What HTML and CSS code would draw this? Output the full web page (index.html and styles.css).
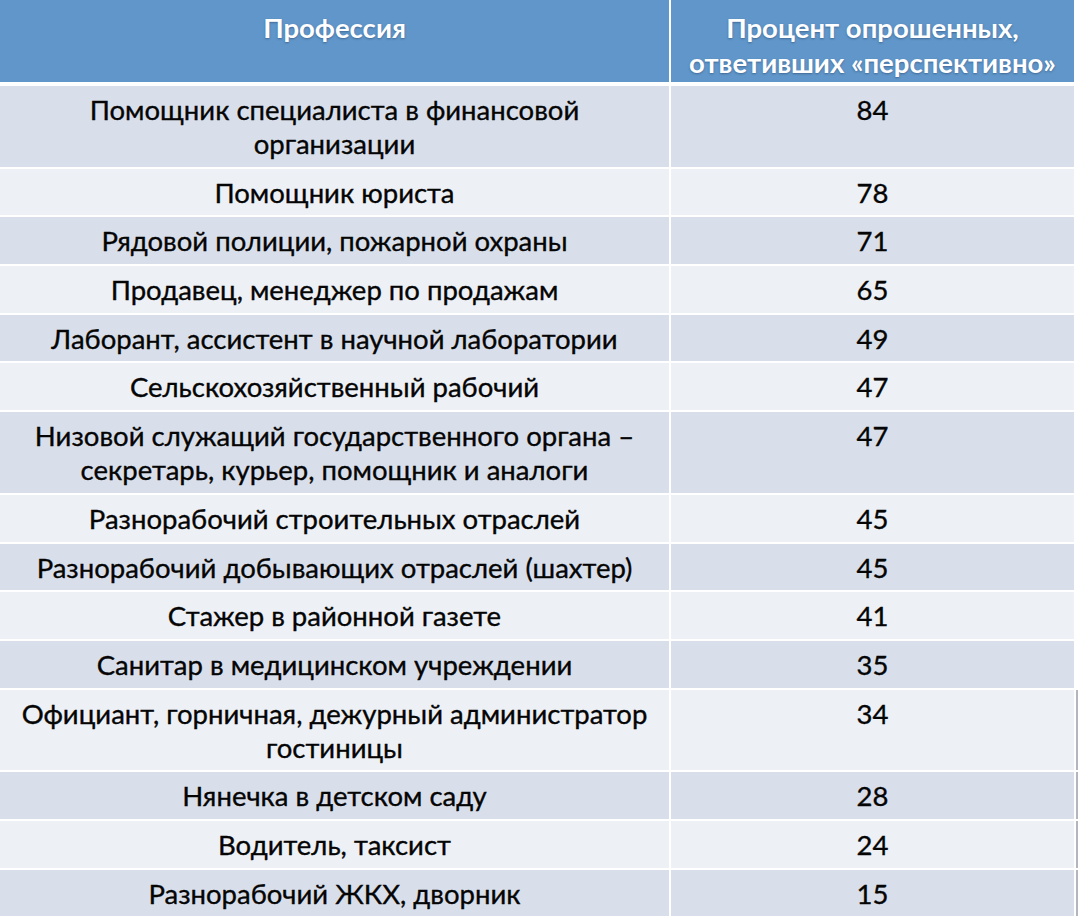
FILE: index.html
```html
<!DOCTYPE html>
<html lang="ru">
<head>
<meta charset="utf-8">
<title>Профессии</title>
<link rel="stylesheet" href="styles.css">
</head>
<body>
<div class="table">
  <div class="cell head">Профессия</div>
  <div class="cell head">Процент опрошенных,<br>ответивших «перспективно»</div>

  <div class="cell dark">Помощник специалиста в финансовой<br>организации</div>
  <div class="cell dark">84</div>

  <div class="cell light">Помощник юриста</div>
  <div class="cell light">78</div>

  <div class="cell dark">Рядовой полиции, пожарной охраны</div>
  <div class="cell dark">71</div>

  <div class="cell light">Продавец, менеджер по продажам</div>
  <div class="cell light">65</div>

  <div class="cell dark">Лаборант, ассистент в научной лаборатории</div>
  <div class="cell dark">49</div>

  <div class="cell light">Сельскохозяйственный рабочий</div>
  <div class="cell light">47</div>

  <div class="cell dark">Низовой служащий государственного органа –<br>секретарь, курьер, помощник и аналоги</div>
  <div class="cell dark">47</div>

  <div class="cell light">Разнорабочий строительных отраслей</div>
  <div class="cell light">45</div>

  <div class="cell dark">Разнорабочий добывающих отраслей (шахтер)</div>
  <div class="cell dark">45</div>

  <div class="cell light">Стажер в районной газете</div>
  <div class="cell light">41</div>

  <div class="cell dark">Санитар в медицинском учреждении</div>
  <div class="cell dark">35</div>

  <div class="cell light">Официант, горничная, дежурный администратор<br>гостиницы</div>
  <div class="cell light edge">34</div>

  <div class="cell dark">Нянечка в детском саду</div>
  <div class="cell dark edge">28</div>

  <div class="cell light">Водитель, таксист</div>
  <div class="cell light edge">24</div>

  <div class="cell dark last">Разнорабочий ЖКХ, дворник</div>
  <div class="cell dark edge last">15</div>
</div>
</body>
</html>
```
FILE: styles.css
```css
html, body {
  margin: 0;
  padding: 0;
  background: #ffffff;
}

body {
  font-family: Lato, "Open Sans", "Liberation Sans", sans-serif;
  color: #050505;
}

.table {
  display: grid;
  grid-template-columns: 669px 403px;
  column-gap: 2px;
  row-gap: 2px;
  width: 1074px;
}

.cell {
  text-align: center;
  font-size: 27.5px;
  line-height: 34px;
  padding: 7px 0 5.7px;
  -webkit-text-stroke: 0.35px #050505;
}

.head {
  background: #6096c9;
  color: #ffffff;
  font-weight: 700;
  line-height: 35px;
  padding: 10px 0 2px;
  min-height: 70px;
  margin-bottom: 2px;
  -webkit-text-stroke: 0;
  text-shadow: 0 1px 2px rgba(40, 70, 110, 0.55);
}

.dark {
  background: #d9dfea;
}

.light {
  background: #edf0f5;
}

.edge {
  box-shadow: 2px 0 0 #ffffff, 4px 0 0 #b3b7bd;
}

.last {
  box-shadow: 0 2px 0 #b3b7bd;
}

.edge.last {
  box-shadow: 2px 0 0 #ffffff, 4px 0 0 #b3b7bd, 0 2px 0 #b3b7bd;
}
```
